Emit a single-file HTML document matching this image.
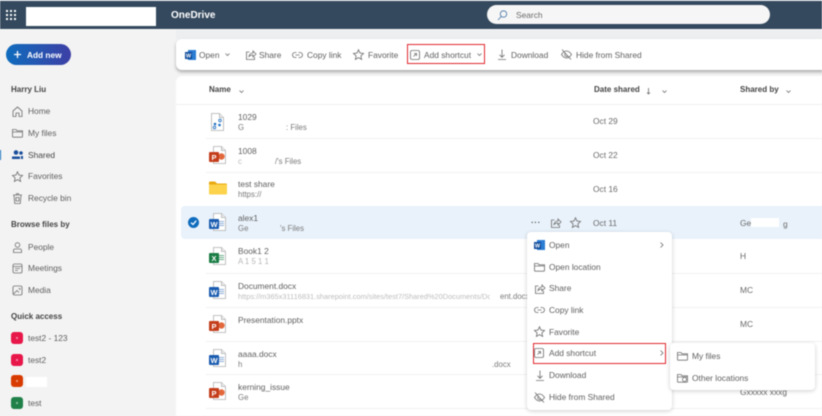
<!DOCTYPE html>
<html><head><meta charset="utf-8"><style>
html,body{margin:0;padding:0;background:#f2f2f2}
#p{position:relative;width:822px;height:416px;overflow:hidden;background:#f3f3f3;font-family:"Liberation Sans",sans-serif;font-size:8.4px;color:#606060;filter:blur(.42px)}
.a{position:absolute}
.t{position:absolute;white-space:nowrap;line-height:12px}
.b{font-weight:bold;color:#444;font-size:8px}
.s{font-size:7.800px;color:#7a7a7a}
.d{color:#6a6a6a}
.l{position:absolute;left:206px;right:0;height:1px;background:#f1f1f1}
svg.i{position:absolute;overflow:visible;fill:none;stroke:#727272;stroke-width:.85}
.q{position:absolute;left:11px;width:12px;height:12px;border-radius:3px}
.q:after{content:"";position:absolute;left:5px;top:5px;width:2px;height:2px;background:rgba(255,255,255,.45)}
.w{position:absolute;background:#fff}
</style></head><body><div id="p">
<svg width="0" height="0" style="position:absolute"><defs>
<g id="page"><path d="M3.500 .5h8l4 4v13h-12z" fill="#fff" stroke="#b0b0b0" stroke-width=".8"/><path d="M11.500 .5v4h4" fill="#eee" stroke="#b0b0b0" stroke-width=".8"/></g>
<g id="word"><use href="#page"/><path d="M9 8.500h5M9 10.500h5M9 12.500h5" stroke="#8fb0d8"/><rect x="-1" y="6" width="10" height="10" rx="1" fill="#1a5cb0"/><text x="4" y="13.800" font-size="7.500" font-weight="bold" fill="#fff" text-anchor="middle" font-family="Liberation Sans">W</text></g>
<g id="ppt"><use href="#page"/><circle cx="11.500" cy="10.500" r="3.200" fill="#e2683c"/><rect x="-1" y="6" width="10" height="10" rx="1" fill="#c43e1c"/><text x="4" y="13.800" font-size="7.500" font-weight="bold" fill="#fff" text-anchor="middle" font-family="Liberation Sans">P</text></g>
<g id="xls"><use href="#page"/><path d="M9 8.500h5M9 10.500h5M9 12.500h5" stroke="#6fae8a"/><rect x="-1" y="6" width="10" height="10" rx="1" fill="#1a7d45"/><text x="4" y="13.800" font-size="7.500" font-weight="bold" fill="#fff" text-anchor="middle" font-family="Liberation Sans">X</text></g>
<g id="share"><path d="M4.500 3H1.500v7.500h8V8M4 7.500C4.500 5 6 4 8 4V2l3 3-3 3V6C6.500 6 5 6.500 4 7.500z"/></g>
<g id="star"><path d="M5.500 .8l1.500 3.300 3.500.4-2.600 2.400.7 3.500-3.100-1.800-3.100 1.800.7-3.500L.5 4.500l3.500-.4z"/></g>
<g id="link"><path d="M4.500 2.500H3a2.500 2.500 0 0 0 0 5h1.500M6.500 2.500H8a2.500 2.500 0 0 1 0 5H6.500M3.500 5h4"/></g>
<g id="short"><rect x=".5" y=".5" width="9" height="9" rx="1.500"/><path d="M3.500 6.500L6.500 3.500M4 3.500h2.500V6"/></g>
<g id="dl"><path d="M5 .5v7.500M2.500 5.800L5 8.300l2.500-2.500M1 10.500h8"/></g>
<g id="hide"><path d="M.5 5.500S2.500 2 5.500 2s5 3.500 5 3.500-2 3.500-5 3.500-5-3.500-5-3.500zM1 .5l9 10M4 4.500a2 2 0 0 0 3 2.500"/></g>
<g id="fold"><path d="M.5 8.500v-7h3.500l1 1.300h5.500v5.700a.7.7 0 0 1-.7.7H1.200a.7.7 0 0 1-.7-.7zM.5 4h10"/></g>
</defs></svg>

<!-- Header -->
<div class="a" style="left:0;top:1px;width:822px;height:28px;background:#34495e"></div>
<div class="a" style="left:0;top:0;width:822px;height:1px;background:#dde1e5"></div>
<div class="a" style="left:0;top:29px;width:822px;height:1px;background:#fafafa"></div>
<div class="a" style="left:176px;top:30px;width:646px;height:9px;background:#eceef0"></div>
<svg class="a" style="left:6px;top:10px" width="10" height="10" fill="#fff"><rect x="0" y="0" width="2" height="2"/><rect x="4" y="0" width="2" height="2"/><rect x="8" y="0" width="2" height="2"/><rect x="0" y="4" width="2" height="2"/><rect x="4" y="4" width="2" height="2"/><rect x="8" y="4" width="2" height="2"/><rect x="0" y="8" width="2" height="2"/><rect x="4" y="8" width="2" height="2"/><rect x="8" y="8" width="2" height="2"/></svg>
<div class="w" style="left:26px;top:7px;width:130px;height:19px"></div>
<div class="t" style="left:171px;top:10px;color:#fff;font-weight:bold;font-size:10px">OneDrive</div>
<div class="a" style="left:487px;top:5px;width:283px;height:19px;border-radius:10px;background:#f6f6f6"></div>
<svg class="i" style="left:497px;top:10px;stroke:#4a78a8" width="11" height="11"><circle cx="6.500" cy="4" r="3.200"/><path d="M4.200 6.500L1 10"/></svg>
<div class="t d" style="left:516px;top:9px;font-size:8.400px">Search</div>

<!-- Sidebar -->
<div class="a" style="left:6px;top:44px;width:65px;height:21px;border-radius:11px;background:linear-gradient(90deg,#0f6cbd,#3d3fa5)"></div>
<svg class="a" style="left:13px;top:50px" width="9" height="9" stroke="#fff" stroke-width="1.300"><path d="M4.500 1v7M1 4.500h7"/></svg>
<div class="t" style="left:27px;top:49px;color:#fff;font-weight:bold;font-size:8.300px">Add new</div>
<div class="t b" style="left:11px;top:84px">Harry Liu</div>
<svg class="i" style="left:12px;top:106px" width="11" height="11"><path d="M1 5L5.500 1 10 5v5.500H7V7H4v3.500H1z"/></svg><div class="t" style="left:28px;top:105px">Home</div>
<svg class="i" style="left:12px;top:128px" width="11" height="10"><use href="#fold"/></svg><div class="t" style="left:28px;top:127px">My files</div>
<div class="a" style="left:0;top:150px;width:1px;height:10px;background:#0f6cbd"></div>
<svg class="a" style="left:12px;top:150px" width="11" height="10" fill="#1a4f9c"><circle cx="4" cy="2.500" r="2.300"/><circle cx="9" cy="3" r="1.800"/><path d="M0 6.500h8v2.500H0zM9 6h2v3H9z"/></svg><div class="t" style="left:28px;top:149px;color:#444">Shared</div>
<svg class="i" style="left:12px;top:171px" width="11" height="11"><use href="#star"/></svg><div class="t" style="left:28px;top:170px">Favorites</div>
<svg class="i" style="left:12px;top:193px" width="11" height="11"><path d="M1 2h9M4 2l.5-1.300h2L7 2M2 2l.7 8.500h5.600L9 2M4 4.500h3v3.500H4z"/></svg><div class="t" style="left:28px;top:192px">Recycle bin</div>
<div class="t b" style="left:11px;top:219px">Browse files by</div>
<svg class="i" style="left:12px;top:242px" width="11" height="11"><circle cx="5.500" cy="3" r="2.300"/><path d="M1.500 10.500V8.500a1.500 1.500 0 0 1 1.500-1.500h5a1.500 1.500 0 0 1 1.500 1.500v2z"/></svg><div class="t" style="left:28px;top:241px">People</div>
<svg class="i" style="left:12px;top:263px" width="11" height="11"><rect x="1" y="1" width="9" height="9" rx="1.500"/><path d="M1 3.500h9M3 5.500h5M3 7.500h3"/></svg><div class="t" style="left:28px;top:262px">Meetings</div>
<svg class="i" style="left:12px;top:285px" width="11" height="11"><rect x="1" y="1" width="9" height="9" rx="1.500"/><path d="M1.500 9L5 5.500 7 7.500M6.500 3.500h1.500v1.500"/></svg><div class="t" style="left:28px;top:284px">Media</div>
<div class="t b" style="left:11px;top:311px">Quick access</div>
<div class="q" style="top:332px;background:#e8174a"></div><div class="t" style="left:28px;top:332px">test2 - 123</div>
<div class="q" style="top:354px;background:#e8174a"></div><div class="t" style="left:28px;top:354px">test2</div>
<div class="q" style="top:375px;background:#d83b01"></div><div class="w" style="left:26px;top:377px;width:21px;height:10px"></div>
<div class="q" style="top:397px;background:#1f8148"></div><div class="t" style="left:28px;top:397px">test</div>

<!-- Command bar -->
<div class="a" style="left:176px;top:39px;width:660px;height:31px;background:#fff;border-radius:6px;box-shadow:0 2px 3px rgba(0,0,0,.3)"></div>
<svg class="a" style="left:185px;top:50px" width="11" height="10"><rect x="3" y="0" width="8" height="10" fill="#2b7cd3"/><rect x="0" y="2" width="7" height="7" fill="#124d9c"/><text x="3.500" y="7.500" font-size="5.500" font-weight="bold" fill="#fff" text-anchor="middle" font-family="Liberation Sans">W</text></svg>
<div class="t" style="left:199px;top:49px">Open</div>
<svg class="i" style="left:225px;top:53px" width="5" height="3"><path d="M.5.5L2.500 2.500 4.500.5"/></svg>
<svg class="i" style="left:245px;top:49px" width="11" height="11"><use href="#share"/></svg><div class="t" style="left:259px;top:49px">Share</div>
<svg class="i" style="left:292px;top:50px" width="11" height="10"><use href="#link"/></svg><div class="t" style="left:307px;top:49px">Copy link</div>
<svg class="i" style="left:353px;top:49px" width="11" height="11"><use href="#star"/></svg><div class="t" style="left:368px;top:49px">Favorite</div>
<svg class="i" style="left:410px;top:50px" width="10" height="10"><use href="#short"/></svg><div class="t" style="left:424px;top:49px">Add shortcut</div>
<svg class="i" style="left:477px;top:53px" width="5" height="3"><path d="M.5.5L2.500 2.500 4.500.5"/></svg>
<div class="a" style="left:406.500px;top:44px;width:76px;height:18px;border:1px solid #e0282e"></div>
<svg class="i" style="left:497px;top:49px" width="10" height="11"><use href="#dl"/></svg><div class="t" style="left:511px;top:49px">Download</div>
<svg class="i" style="left:561px;top:49px" width="11" height="11"><use href="#hide"/></svg><div class="t" style="left:576px;top:49px">Hide from Shared</div>

<!-- List panel -->
<div class="a" style="left:176px;top:76px;width:660px;height:350px;background:#fff;border-radius:6px"></div>
<div class="t b" style="left:209px;top:84px">Name</div>
<svg class="i" style="left:239px;top:90px" width="5" height="3"><path d="M.5.5L2.500 2.500 4.500.5"/></svg>
<div class="t b" style="left:594px;top:84px">Date shared</div>
<svg class="i" style="left:646px;top:88px" width="5" height="7"><path d="M2.500 0v6M1 4.500L2.500 6 4 4.500"/></svg>
<svg class="i" style="left:662px;top:90px" width="5" height="3"><path d="M.5.5L2.500 2.500 4.500.5"/></svg>
<div class="t b" style="left:740px;top:84px">Shared by</div>
<svg class="i" style="left:786px;top:90px" width="5" height="3"><path d="M.5.5L2.500 2.500 4.500.5"/></svg>

<div class="a" style="left:176px;top:104px;width:646px;height:1px;background:#f0f0f0"></div>
<div class="l" style="top:138px"></div><div class="l" style="top:172px"></div>
<div class="l" style="top:273px"></div><div class="l" style="top:307px"></div><div class="l" style="top:341px"></div><div class="l" style="top:374px"></div><div class="l" style="top:408px"></div>
<div class="a" style="left:181px;top:206px;width:641px;height:33px;background:#e9f2fb;border-radius:4px 0 0 4px"></div>

<!-- Row 1 -->
<svg class="a" style="left:208px;top:113px;overflow:visible" width="17" height="18"><use href="#page"/><circle cx="7" cy="11" r="1.300" fill="#1f6fc0"/><circle cx="12" cy="7.500" r="1.300" fill="none" stroke="#1f6fc0" stroke-width=".8"/><circle cx="6.500" cy="14.500" r="1.300" fill="none" stroke="#1f6fc0" stroke-width=".8"/><circle cx="11.500" cy="12" r="1.300" fill="#1f6fc0"/></svg>
<div class="t" style="left:238px;top:111px">1029</div><div class="t s" style="left:238px;top:122px">G</div><div class="t s" style="left:286px;top:122px">: Files</div>
<div class="t d" style="left:593px;top:115px">Oct 29</div>
<!-- Row 2 -->
<svg class="a" style="left:210px;top:146px;overflow:visible" width="17" height="18"><use href="#ppt"/></svg>
<div class="t" style="left:238px;top:145px">1008</div><div class="t s" style="left:238px;top:156px;color:#bbb">c</div><div class="t s" style="left:275px;top:156px">/'s Files</div>
<div class="t d" style="left:593px;top:149px">Oct 22</div>
<!-- Row 3 -->
<svg class="a" style="left:209px;top:181px" width="18" height="14"><path d="M0 1.500a1 1 0 0 1 1-1h5l2 2h9a1 1 0 0 1 1 1V4H0z" fill="#e8a910"/><path d="M0 3.500h18v9a1 1 0 0 1-1 1H1a1 1 0 0 1-1-1z" fill="#fcd34a"/></svg>
<div class="t" style="left:238px;top:178px">test share</div><div class="t s" style="left:238px;top:189px">https://</div>
<div class="t d" style="left:593px;top:183px">Oct 16</div>
<!-- Row 4 -->
<svg class="a" style="left:188px;top:217px" width="11" height="11"><circle cx="5.500" cy="5.500" r="5.500" fill="#0f6cbd"/><path d="M3 5.700L5 7.500 8.200 3.700" stroke="#fff" stroke-width="1.300" fill="none"/></svg>
<svg class="a" style="left:210px;top:213px;overflow:visible" width="17" height="18"><use href="#word"/></svg>
<div class="t" style="left:238px;top:212px">alex1</div><div class="t s" style="left:238px;top:223px">Ge</div><div class="t s" style="left:280px;top:223px">'s Files</div>
<div class="t" style="left:531px;top:216px;letter-spacing:.5px;font-weight:bold;color:#555">···</div>
<svg class="i" style="left:550px;top:217px" width="11" height="11"><use href="#share"/></svg>
<svg class="i" style="left:570px;top:217px" width="11" height="11"><use href="#star"/></svg>
<div class="t d" style="left:593px;top:217px">Oct 11</div>
<div class="t d" style="left:740px;top:217px">Ge</div><div class="w" style="left:751px;top:218px;width:28px;height:9px;background:#fff"></div><div class="t d" style="left:783px;top:218px">g</div>
<!-- Row 5 -->
<svg class="a" style="left:210px;top:247px;overflow:visible" width="17" height="18"><use href="#xls"/></svg>
<div class="t" style="left:238px;top:245px">Book1 2</div><div class="t s" style="left:238px;top:256px;color:#b5b5b5">A 1 5 1 1</div>
<div class="t d" style="left:740px;top:250px">H</div>
<!-- Row 6 -->
<svg class="a" style="left:210px;top:281px;overflow:visible" width="17" height="18"><use href="#word"/></svg>
<div class="t" style="left:238px;top:280px">Document.docx</div>
<div class="t s" style="left:238px;top:291px;font-size:7.400px;width:252px;overflow:hidden;color:#bdbdbd">https://m365x31116831.sharepoint.com/sites/test7/Shared%20Documents/Document</div>
<div class="t s" style="left:500px;top:291px">ent.docx</div>
<div class="t d" style="left:740px;top:284px">MC</div>
<!-- Row 7 -->
<svg class="a" style="left:210px;top:315px;overflow:visible" width="17" height="18"><use href="#ppt"/></svg>
<div class="t" style="left:238px;top:314px">Presentation.pptx</div>
<div class="t d" style="left:740px;top:318px">MC</div>
<!-- Row 8 -->
<svg class="a" style="left:210px;top:349px;overflow:visible" width="17" height="18"><use href="#word"/></svg>
<div class="t" style="left:238px;top:348px">aaaa.docx</div><div class="t s" style="left:238px;top:359px">h</div><div class="t s" style="left:492px;top:359px">.docx</div>
<!-- Row 9 -->
<svg class="a" style="left:210px;top:382px;overflow:visible" width="17" height="18"><use href="#ppt"/></svg>
<div class="t" style="left:238px;top:381px">kerning_issue</div><div class="t s" style="left:238px;top:392px">Ge</div>
<div class="t d" style="left:740px;top:386px">Gxxxxx xxxg</div>

<!-- Context menu -->
<div class="a" style="left:527px;top:232px;width:145px;height:178px;background:#fff;border-radius:4px;box-shadow:0 1px 4px rgba(0,0,0,.2)"></div>
<svg class="a" style="left:534px;top:240px" width="11" height="10"><rect x="3" y="0" width="8" height="10" fill="#2b7cd3"/><rect x="0" y="2" width="7" height="7" fill="#124d9c"/><text x="3.500" y="7.500" font-size="5.500" font-weight="bold" fill="#fff" text-anchor="middle" font-family="Liberation Sans">W</text></svg>
<div class="t" style="left:549px;top:239px">Open</div>
<svg class="i" style="left:660px;top:242px" width="4" height="6"><path d="M.5.5L3 3 .5 5.500"/></svg>
<svg class="i" style="left:534px;top:262px" width="11" height="10"><use href="#fold"/></svg><div class="t" style="left:549px;top:261px">Open location</div>
<svg class="i" style="left:534px;top:283px" width="11" height="11"><use href="#share"/></svg><div class="t" style="left:549px;top:282px">Share</div>
<svg class="i" style="left:534px;top:305px" width="11" height="10"><use href="#link"/></svg><div class="t" style="left:549px;top:304px">Copy link</div>
<svg class="i" style="left:534px;top:326px" width="11" height="11"><use href="#star"/></svg><div class="t" style="left:549px;top:326px">Favorite</div>
<svg class="i" style="left:534px;top:348px" width="10" height="10"><use href="#short"/></svg><div class="t" style="left:549px;top:347px">Add shortcut</div>
<svg class="i" style="left:660px;top:350px" width="4" height="6"><path d="M.5.5L3 3 .5 5.500"/></svg>
<div class="a" style="left:533px;top:343px;width:131px;height:19px;border:1px solid #e0282e"></div>
<svg class="i" style="left:535px;top:370px" width="10" height="11"><use href="#dl"/></svg><div class="t" style="left:549px;top:369px">Download</div>
<svg class="i" style="left:534px;top:392px" width="11" height="11"><use href="#hide"/></svg><div class="t" style="left:549px;top:391px">Hide from Shared</div>

<!-- Submenu -->
<div class="a" style="left:670px;top:343px;width:145px;height:47px;background:#fff;border-radius:4px;box-shadow:0 1px 4px rgba(0,0,0,.2)"></div>
<svg class="i" style="left:677px;top:351px" width="11" height="10"><use href="#fold"/></svg><div class="t" style="left:692px;top:350px">My files</div>
<svg class="i" style="left:677px;top:373px" width="11" height="10"><use href="#fold"/><circle cx="7.500" cy="6.500" r="2" fill="#fff"/></svg><div class="t" style="left:692px;top:372px">Other locations</div>
</div></body></html>
